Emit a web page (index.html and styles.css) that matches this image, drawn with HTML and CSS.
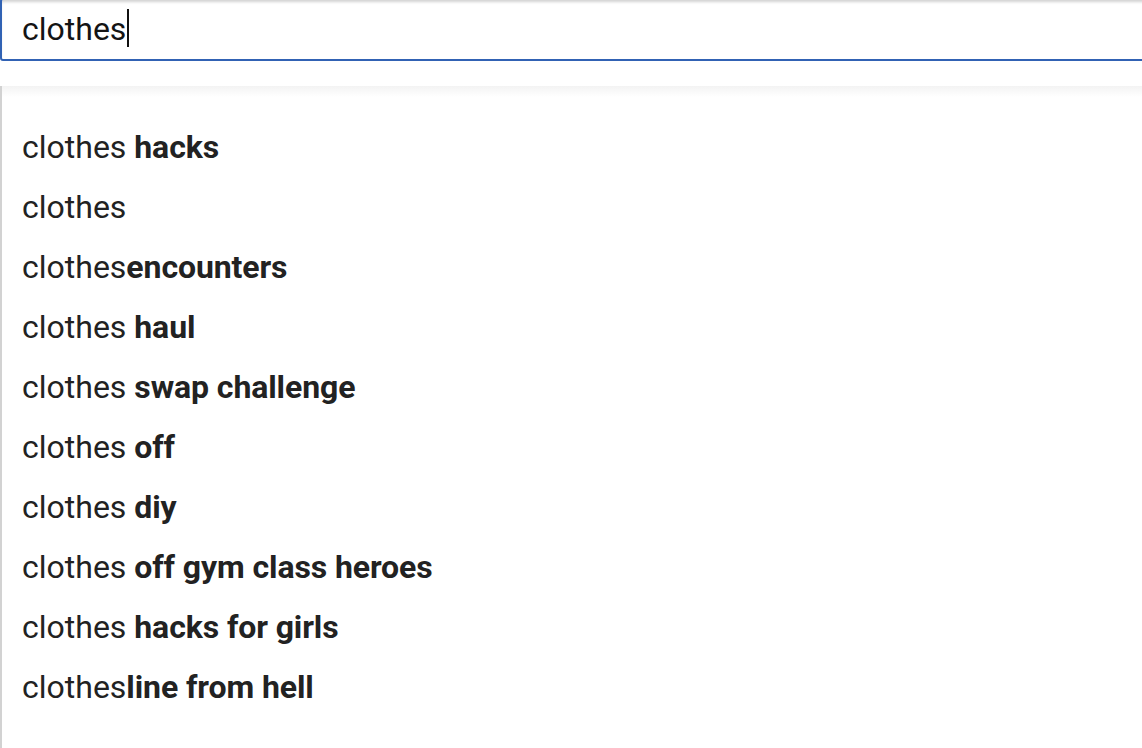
FILE: index.html
```html
<!DOCTYPE html>
<html lang="en">
<head>
    <meta charset="UTF-8">
    <meta name="viewport" content="width=device-width, initial-scale=1.0">
    <title>Search suggestions</title>
    <link rel="stylesheet" href="styles.css">
</head>
<body>

    <!-- Search box -->
    <div class="search-box">
        <span class="query">clothes</span><span class="caret"></span>
    </div>

    <!-- Suggestion list -->
    <ul class="suggestions">
        <li>clothes <b>hacks</b></li>
        <li>clothes</li>
        <li>clothes<b>encounters</b></li>
        <li>clothes <b>haul</b></li>
        <li>clothes <b>swap challenge</b></li>
        <li>clothes <b>off</b></li>
        <li>clothes <b>diy</b></li>
        <li>clothes <b>off gym class heroes</b></li>
        <li>clothes <b>hacks for girls</b></li>
        <li>clothes<b>line from hell</b></li>
    </ul>

</body>
</html>
```

FILE: styles.css
```css
* {
    box-sizing: border-box;
}
html, body {
    margin: 0;
    height: 100%;
    overflow: hidden;
}
body {
    background: #fff;
    font-family: Roboto, 'Noto Sans', sans-serif;
    font-size: 32px;
}
.search-box {
    width: calc(100% + 10px);
    margin-top: -2px;
    padding: 9px 20px 10px 20px;
    border: 2px solid #3162b4;
    border-radius: 3px;
    box-shadow: inset 0 3px 3px -1px rgba(0, 0, 0, 0.18);
    line-height: 40px;
    color: #141414;
    white-space: nowrap;
}
.caret {
    display: inline-block;
    width: 2px;
    height: 38px;
    margin-left: 1px;
    vertical-align: -7px;
    background: #111;
}
.suggestions {
    list-style: none;
    margin: 25px 0 0 0;
    padding: 31px 0 0 20px;
    border-left: 2px solid #d2d2d2;
    background: linear-gradient(#f3f3f3, #fff 11px);
    height: 662px;
}
.suggestions li {
    line-height: 60px;
    color: #222;
    white-space: nowrap;
}
.suggestions b {
    font-weight: 700;
    letter-spacing: -0.1px;
}
```
